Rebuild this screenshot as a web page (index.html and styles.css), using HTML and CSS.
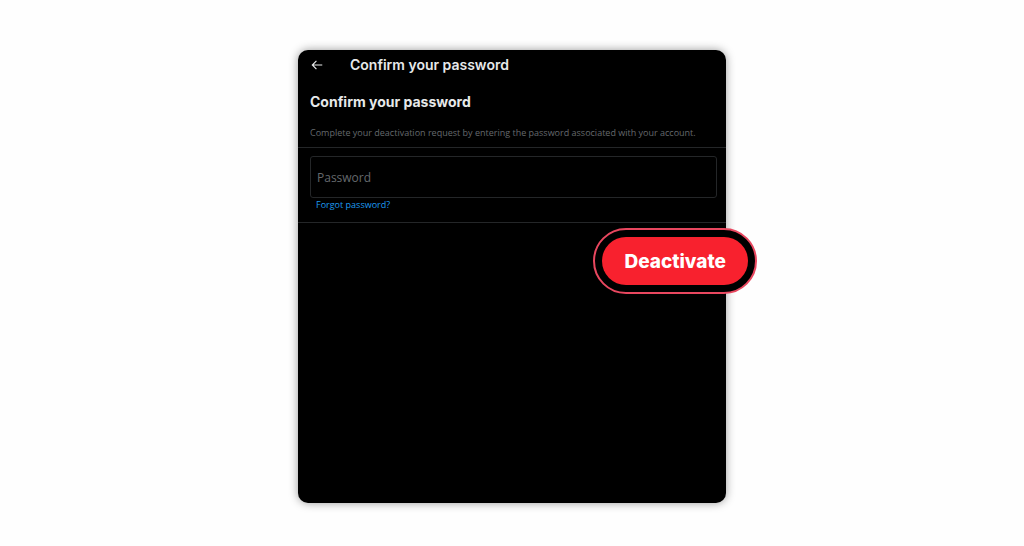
FILE: index.html
```html
<!DOCTYPE html>
<html lang="en">
<head>
  <meta charset="UTF-8" />
  <meta name="viewport" content="width=device-width, initial-scale=1.0"/>
  <title>Confirm your password</title>
  <link rel="stylesheet" href="styles.css">
</head>

<body>
  <main class="panel">
    <header class="top-bar">
      <a class="back" href="#" aria-label="Back">
        <svg viewBox="0 0 24 24" width="14" height="14" aria-hidden="true">
          <path d="M11 5 L4 12 L11 19 M4 12 H21" />
        </svg>
      </a>
      <h2>Confirm your password</h2>
    </header>

    <form class="confirm">
      <section class="intro">
        <h1>Confirm your password</h1>
        <p>Complete your deactivation request by entering the password associated with your account.</p>
      </section>

      <section class="password">
        <input type="password" placeholder="Password" aria-label="Password" />
        <a href="#">Forgot password?</a>
      </section>

      <div class="actions">
        <div class="ring">
          <button type="button">Deactivate</button>
        </div>
      </div>
    </form>
  </main>
</body>
</html>
```
FILE: styles.css
```css
* {
  box-sizing: border-box;
}
body {
  margin: 0;
  min-height: 100vh;
  padding: 50px 24px 43px;
  display: flex;
  justify-content: center;
  background: #fefefe;
  font-family: "Open Sans", sans-serif;
}
.panel {
  width: 100%;
  max-width: 428px;
  background: #000;
  color: #e7e9ea;
  border-radius: 10px;
  box-shadow: 0 0 10px rgba(0, 0, 0, 0.4);
}
.top-bar {
  display: flex;
  align-items: center;
  gap: 26px;
  height: 30px;
  padding: 0 12px;
}
.back {
  display: flex;
}
.back svg {
  fill: none;
  stroke: #e7e9ea;
  stroke-width: 2;
}
h1,
h2 {
  margin: 0;
  font-family: Inter, sans-serif;
  font-size: 14px;
  line-height: 20px;
  font-weight: 700;
}
h2 {
  font-weight: 600;
}
.intro {
  padding: 12px 12px 7px;
  border-bottom: 1px solid #242628;
}
.intro p {
  margin: 14px 0 0;
  font-size: 9px;
  line-height: 14px;
  color: #65696d;
}
.password {
  display: flex;
  flex-direction: column;
  align-items: flex-start;
  padding: 8px 9px 10px 12px;
  border-bottom: 1px solid #242628;
}
.password input {
  width: 100%;
  height: 42px;
  padding: 0 6px;
  border: 1px solid #242628;
  border-radius: 3px;
  background: transparent;
  color: #e7e9ea;
  font-family: inherit;
  font-size: 12px;
}
.password input::placeholder {
  color: #65696d;
}
.password a {
  margin-left: 6px;
  font-size: 9px;
  line-height: 14px;
  color: #1d9bf0;
  text-decoration: none;
}
.actions {
  display: flex;
  justify-content: flex-end;
  margin: 5px -31px 0 0;
}
.ring {
  padding: 7px;
  border: 2px solid #e8475f;
  border-radius: 33px;
  background: #000;
}
button {
  height: 48px;
  padding: 0 22px;
  border: none;
  border-radius: 24px;
  background: #f8212e;
  color: #fff;
  font-family: Inter, sans-serif;
  font-size: 19px;
  font-weight: 800;
  cursor: pointer;
}
```
